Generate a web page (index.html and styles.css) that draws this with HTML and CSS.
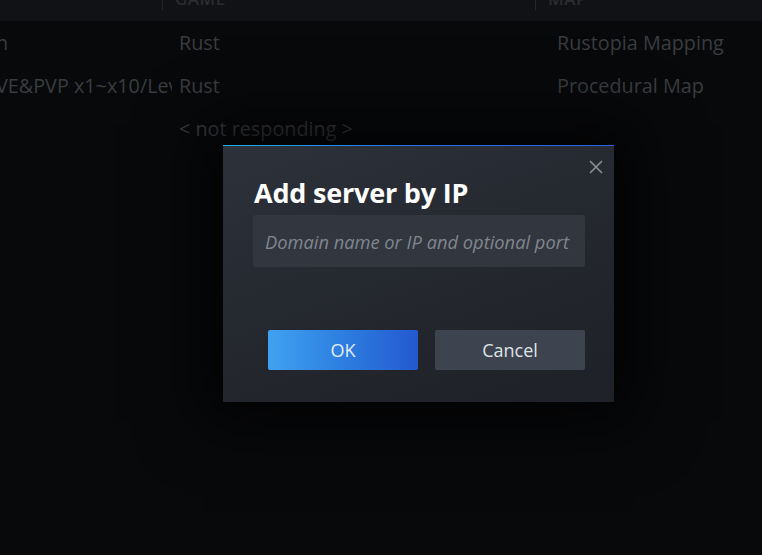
FILE: index.html
```html
<!DOCTYPE html>
<html>
<head>
<meta charset="utf-8">
<link rel="stylesheet" href="styles.css">
</head>
<body>
<div class="list">
  <div class="head">
    <div class="hcell c1"></div>
    <div class="hcell c2"><span class="sep"></span><span class="htext">GAME</span></div>
    <div class="hcell c3"><span class="sep"></span><span class="htext">MAP</span></div>
  </div>
  <div class="row">
    <div class="cell c1"><span class="name n1">n</span></div>
    <div class="cell c2">Rust</div>
    <div class="cell c3">Rustopia Mapping</div>
  </div>
  <div class="row">
    <div class="cell c1"><span class="name n2">VE&amp;PVP x1~x10/Level 10</span></div>
    <div class="cell c2">Rust</div>
    <div class="cell c3">Procedural Map</div>
  </div>
  <div class="row">
    <div class="cell c1"></div>
    <div class="cell c2">&lt; not responding &gt;</div>
    <div class="cell c3"></div>
  </div>
</div>

<div class="dialog">
  <button class="close" aria-label="Close">
    <svg width="14" height="14" viewBox="0 0 14 14"><path d="M1 1 L13 13 M13 1 L1 13" stroke="#8a9097" stroke-width="1.6" fill="none"/></svg>
  </button>
  <h1 class="title">Add server by IP</h1>
  <div class="input">Domain name or IP and optional port</div>
  <div class="actions">
    <button class="btn ok">OK</button>
    <button class="btn cancel">Cancel</button>
  </div>
</div>
</body>
</html>
```

FILE: styles.css
```css
html, body {
  margin: 0;
  padding: 0;
  width: 762px;
  height: 555px;
  overflow: hidden;
  background: #08090b;
  font-family: "Open Sans", "Noto Sans", sans-serif;
}
.list {
  display: flex;
  flex-direction: column;
}
.head {
  display: flex;
  height: 21px;
  background: #111215;
  overflow: hidden;
}
.hcell {
  display: flex;
  align-items: flex-start;
  height: 21px;
}
.sep {
  width: 1px;
  height: 10px;
  background: #24262a;
}
.htext {
  margin-left: 12px;
  margin-top: -13px;
  font-size: 17px;
  font-weight: 600;
  color: #2a2c30;
  letter-spacing: 0.5px;
}
.head .c1 { width: 162px; flex: none; }
.head .c2 { width: 373px; flex: none; }
.head .c3 { flex: 1; }
.row {
  display: flex;
  height: 43px;
  align-items: center;
  font-size: 19.8px;
  color: #3a3c40;
  white-space: nowrap;
}
.cell.c1 { width: 172px; flex: none; overflow: hidden; text-overflow: clip; }
.cell.c2 { width: 385px; flex: none; padding-left: 7px; box-sizing: border-box; }
.cell.c3 { flex: 1; }
.name { display: inline-block; margin-left: -4px; }

.dialog {
  position: absolute;
  left: 223px;
  top: 145px;
  width: 391px;
  height: 257px;
  box-sizing: border-box;
  padding: 30px 29px 32px 31px;
  background: linear-gradient(160deg, #2d313a 0%, #23262d 60%, #1e2127 100%);
  border: 0;
  border-top: 1px solid #1ea6e8;
  border-image: linear-gradient(to right, #1bb0e6, #2a6ef0 50%, #2b5fe8) 1;
  box-shadow: 0 0 60px 20px rgba(0,0,0,0.75);
  display: flex;
  flex-direction: column;
}
.close {
  position: absolute;
  top: 11px;
  right: 8px;
  width: 20px;
  height: 20px;
  padding: 0;
  border: 0;
  background: transparent;
  display: flex;
  align-items: center;
  justify-content: center;
}
.title {
  margin: 0;
  font-size: 27px;
  line-height: 34px;
  font-weight: 700;
  color: #ffffff;
  letter-spacing: -0.2px;
}
.input {
  margin-top: 5px;
  margin-left: -1px;
  height: 52px;
  background: #32363f;
  border-radius: 3px;
  display: flex;
  align-items: center;
  padding-left: 12px;
  font-size: 18.3px;
  font-style: italic;
  color: #80868e;
  white-space: nowrap;
}
.actions {
  margin-top: auto;
  display: flex;
  justify-content: flex-end;
  gap: 17px;
}
.btn {
  width: 150px;
  height: 40px;
  border: 0;
  border-radius: 2px;
  font-family: "Open Sans", "Noto Sans", sans-serif;
  font-size: 18px;
  color: #e4ecf4;
  padding: 0;
}
.ok {
  background: linear-gradient(to right, #3fa2f0 0%, #2d7ee0 50%, #2459d0 100%);
}
.cancel {
  background: #3d434f;
  color: #dfe3e8;
}
```
